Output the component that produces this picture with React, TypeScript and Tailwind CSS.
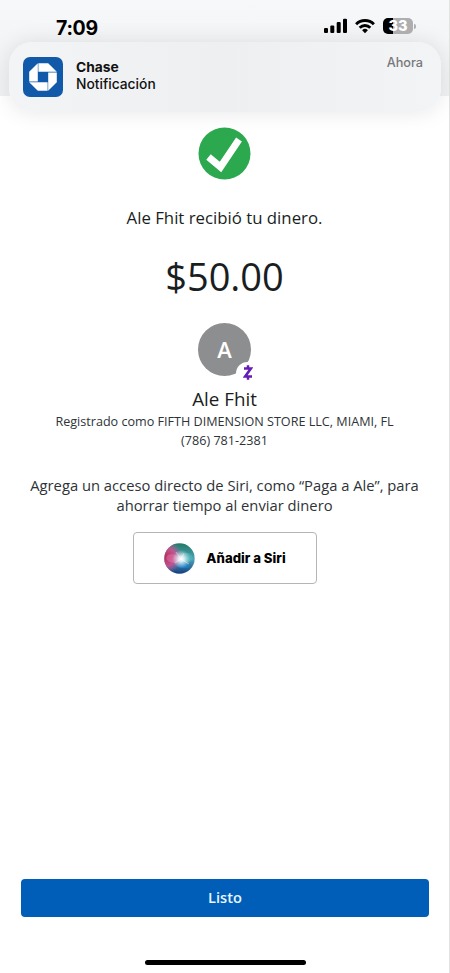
import React from 'react';

const StatusIcons: React.FC = () => (
  <div className="flex items-center">
    <svg className="w-6 h-4" viewBox="0 0 24 16" fill="#000">
      <rect x="0" y="10" width="4" height="5" rx="1.1" />
      <rect x="6.3" y="7.5" width="4" height="7.5" rx="1.1" />
      <rect x="12.7" y="4" width="4" height="11" rx="1.1" />
      <rect x="19" y="0.7" width="4" height="14.3" rx="1.1" />
    </svg>
    <svg className="w-5 h-4 ml-[7px]" viewBox="0 0 20 16" fill="none" stroke="#000" strokeWidth="2.9">
      <path d="M1.1 6.2a12.6 12.6 0 0 1 17.8 0" />
      <path d="M4.7 9.7a7.5 7.5 0 0 1 10.6 0" />
      <path d="M10 15.2l-2.9-2.9a4.1 4.1 0 0 1 5.8 0z" fill="#000" stroke="none" />
    </svg>
    <div className="ml-2 flex h-4 w-[30px] items-center justify-center rounded-[5px] bg-linear-to-r from-black from-33% to-[#aeaeb0] to-33% text-[14.5px] leading-4 font-extrabold text-white">
      33
    </div>
    <div className="ml-px h-[5px] w-[2px] rounded-r-full bg-[#aeaeb0]" />
  </div>
);

const ChaseLogo: React.FC = () => (
  <svg className="size-10 shrink-0" viewBox="0 0 40 40">
    <rect width="40" height="40" rx="7" fill="#115aa9" />
    <g fill="#fff">
      <path d="M15.4 6.2H25.2L33.8 14.8H15.4z" />
      <path d="M15.4 6.2H25.2L33.8 14.8H15.4z" transform="rotate(90 20 20)" />
      <path d="M15.4 6.2H25.2L33.8 14.8H15.4z" transform="rotate(180 20 20)" />
      <path d="M15.4 6.2H25.2L33.8 14.8H15.4z" transform="rotate(270 20 20)" />
    </g>
  </svg>
);

const SiriOrb: React.FC = () => (
  <svg className="size-[31px]" viewBox="0 0 31 31">
    <defs>
      <linearGradient id="siri-base" x1="0.55" y1="0" x2="0.5" y2="1">
        <stop offset="0" stopColor="#1f7a66" />
        <stop offset="0.5" stopColor="#4fa3b8" />
        <stop offset="1" stopColor="#123f80" />
      </linearGradient>
      <radialGradient id="siri-pink" cx="0.05" cy="0.45" r="0.55">
        <stop offset="0" stopColor="#b8265a" />
        <stop offset="0.55" stopColor="#d84c8c" stopOpacity="0.85" />
        <stop offset="1" stopColor="#b95d9c" stopOpacity="0" />
      </radialGradient>
      <radialGradient id="siri-glow" cx="0.56" cy="0.52" r="0.3">
        <stop offset="0" stopColor="#fff" />
        <stop offset="0.3" stopColor="#fff" stopOpacity="0.8" />
        <stop offset="1" stopColor="#d8edff" stopOpacity="0" />
      </radialGradient>
    </defs>
    <circle cx="15.5" cy="15.5" r="15.2" fill="url(#siri-base)" />
    <path d="M16 15C20 8 27 9 29 15C27 20 22 21 16 15" fill="#51c3bd" opacity="0.45" />
    <path d="M17 16C20 19 24 22 26 24C20 26 14 25 13 22z" fill="#1684ce" opacity="0.75" />
    <circle cx="15.5" cy="15.5" r="15.2" fill="url(#siri-pink)" />
    <path d="M2 15C4 9 12 11 17 16C12 21 4 21 2 15" fill="#f392bd" opacity="0.35" />
    <circle cx="15.5" cy="15.5" r="15.2" fill="url(#siri-glow)" />
    <path d="M17 16L12 9M17 16L20 10M17 16L25 21M17 16L11 20" stroke="#fff" strokeWidth="0.8" opacity="0.5" />
  </svg>
);

const Notification: React.FC = () => (
  <section className="mx-[9px] mt-0.5 flex h-[70px] rounded-[23px] bg-linear-to-r from-[#f3f4f6] via-[#eeeff1] to-[#f3f4f6] px-[14px] font-['Inter',sans-serif] shadow-[0_0_22px_rgba(0,0,0,0.1)]">
    <div className="pt-[15px]">
      <ChaseLogo />
    </div>
    <div className="ml-[13px] pt-[17px] text-[13.8px] leading-[17px] text-[#111]">
      <h2 className="font-bold">Chase</h2>
      <p className="font-medium">Notificación</p>
    </div>
    <time className="mt-[13px] mr-[4px] ml-auto text-[12.7px] leading-4 font-medium text-[#77787b]">Ahora</time>
  </section>
);

const App: React.FC = () => {
  return (
    <div className="flex h-[973px] w-[450px] flex-col overflow-hidden bg-white font-['Open_Sans',sans-serif] text-[#191e22] shadow-[inset_-1px_0_0_#e3e3e3]">
      <header className="mr-px h-[96px] shrink-0 bg-linear-to-b from-[#f7f8fa] to-[#f0f1f3]">
        <div className="-mr-px flex h-10 items-start justify-between pt-[18px] pr-[34px] pl-[56px] font-['Inter',sans-serif]">
          <span className="text-[19.5px] leading-5 font-bold tracking-[-0.3px] text-black">7:09</span>
          <StatusIcons />
        </div>
        <div className="-mr-px">
          <Notification />
        </div>
      </header>

      <main className="flex flex-1 flex-col items-center pt-[31px] text-center">
        <svg className="mr-px size-[53px]" viewBox="0 0 53 53">
          <circle cx="26.5" cy="26.5" r="26" fill="#2ca84f" />
          <path d="M10.5 30L22.5 40L41 12.5" fill="none" stroke="#fff" strokeWidth="7" />
        </svg>
        <h1 className="mr-px mt-[26px] text-[16.8px] leading-6">Ale Fhit recibió tu dinero.</h1>
        <p className="mr-px mt-[19px] text-[38px] leading-[54px]">$50.00</p>

        <div className="relative mt-5 mr-px flex size-[53px] items-center justify-center rounded-full bg-[#8d8e90] text-[22px] font-semibold text-white">
          A
          <span className="absolute top-[39px] left-[38px] flex size-[23px] items-center justify-center rounded-full bg-white">
            <svg className="-mt-[2px] h-[15px] w-[10px]" viewBox="0 0 10 15" fill="none" stroke="#641cb4" strokeWidth="2.5">
              <path d="M1 3.6H7.8L2.2 11.4H9M5 0.3V4M5 11V14.7" />
            </svg>
          </span>
        </div>
        <h2 className="mr-px mt-[10px] text-[18.8px] leading-[26px]">Ale Fhit</h2>
        <p className="mr-px mt-px text-[12.6px] leading-[18.5px] text-[#2e3337]">
          Registrado como FIFTH DIMENSION STORE LLC, MIAMI, FL
          <br />
          (786) 781-2381
        </p>

        <p className="mt-[25px] mr-px text-[14.75px] leading-5 text-[#2e3337]">
          Agrega un acceso directo de Siri, como “Paga a Ale”, para
          <br />
          ahorrar tiempo al enviar dinero
        </p>

        <button className="mt-[17px] flex h-[52px] w-[184px] items-center justify-center gap-[11px] rounded-[4px] border border-[#b5b5b7] font-['Inter',sans-serif] text-[13.2px] font-extrabold text-black">
          <SiriOrb />
          <span className="pt-0.5">Añadir a Siri</span>
        </button>
      </main>

      <footer className="flex flex-col items-center px-[21px] pb-[8px]">
        <button className="h-[38px] w-full rounded-[4px] bg-[#005eb8] text-[14.6px] font-semibold text-[#e8f7ff]">Listo</button>
        <div className="mt-[43px] h-[5px] w-[161px] rounded-full bg-black" />
      </footer>
    </div>
  );
};

export default App;
